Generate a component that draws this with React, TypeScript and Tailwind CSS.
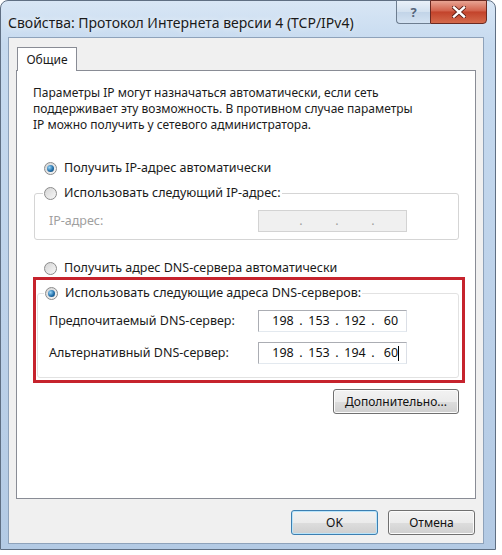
import React from 'react';

const Radio: React.FC<{ checked?: boolean; label: string }> = ({ checked, label }) => (
  <span className="flex items-center gap-[7px] h-4 whitespace-nowrap text-[12.5px]">
    <span className="w-[13px] h-[13px] shrink-0 rounded-full border border-[#8b8b8b] bg-[linear-gradient(135deg,#d4d4d4,#f8f8f8)] flex items-center justify-center">
      {checked && (
        <span className="w-[7px] h-[7px] rounded-full bg-[radial-gradient(circle_at_35%_35%,#9ad6f7,#2370ab_55%,#0c3b62)]" />
      )}
    </span>
    <span>{label}</span>
  </span>
);

const IpBox: React.FC<{ parts?: string[]; disabled?: boolean; caret?: boolean }> = ({
  parts = ['', '', '', ''],
  disabled,
  caret,
}) => (
  <div
    className={
      disabled
        ? 'w-[149px] h-[22px] border border-[#d3d3d3] bg-[#f0f0f0] flex items-center pl-[10px] text-[#a0a0a0]'
        : 'w-[149px] h-[22px] border border-[#abadb3] border-b-[#e3e9ef] border-r-[#dbdfe6] bg-white flex items-center pl-[10px] text-[#111] text-[12.5px]'
    }
  >
    {parts.map((p, i) => (
      <React.Fragment key={i}>
        <span className="w-[28px] text-center relative">
          {p}
          {caret && i === 3 && (
            <span className="absolute right-[6px] top-[1px] w-px h-[15px] bg-black" />
          )}
        </span>
        {i < 3 && <span className="w-[8px] text-center">.</span>}
      </React.Fragment>
    ))}
  </div>
);

const Btn: React.FC<{ label: string; primary?: boolean; w: string }> = ({ label, primary, w }) => (
  <button
    className={
      (primary
        ? 'border-[#3c7fb1] shadow-[inset_0_0_0_1px_#b9e4fa] '
        : 'border-[#707070] shadow-[inset_0_0_0_1px_#fbfbfb] ') +
      w +
      ' h-[25px] rounded-[3px] border bg-[linear-gradient(to_bottom,#f2f2f2_0%,#ebebeb_50%,#dddddd_51%,#cfcfcf_100%)] text-[#111] flex items-center justify-center'
    }
  >
    {label}
  </button>
);

export default function App() {
  return (
    <div className="w-[502px] h-[555px] bg-white font-['Noto_Sans',sans-serif] text-[12px] leading-4 text-[#1b1b1b]">
      <div className="w-[496px] h-[550px] rounded-t-[8px] border border-[#5f6f83] bg-[linear-gradient(to_bottom,#d8e6f5,#c6daef_8%,#bcd1e9_60%,#b3cae4)] flex flex-col">
        {/* title bar */}
        <div className="h-[36px] flex justify-between shrink-0">
          <div className="pl-[7px] pt-[12px] text-[14px] leading-5 text-[#1a1a1a] whitespace-nowrap [text-shadow:0_0_6px_#ffffff]">
            Свойства: Протокол Интернета версии 4 (TCP/IPv4)
          </div>
          <div className="flex mr-[8px] h-[24px] -mt-px">
            <div className="w-[34px] h-full rounded-bl-[4px] border border-[#6d7d90] border-r-0 bg-[linear-gradient(to_bottom,#e9f1f9,#d2e0ef_50%,#c2d4e8_51%,#d3e2f2)] flex items-center justify-center text-[#55647a] text-[13px] font-bold">
              ?
            </div>
            <div className="w-[57px] h-full rounded-br-[4px] border border-[#6a2a22] bg-[linear-gradient(to_bottom,#e8a493,#d2624c_45%,#c3432b_50%,#d46a4c)] flex items-center justify-center">
              <svg width="14" height="12" viewBox="0 0 14 12">
                <path d="M2 1.5 L12 10.5 M12 1.5 L2 10.5" stroke="#5a1d14" strokeWidth="4.2" strokeLinecap="square" />
                <path d="M2 1.5 L12 10.5 M12 1.5 L2 10.5" stroke="#ffffff" strokeWidth="2.4" strokeLinecap="square" />
              </svg>
            </div>
          </div>
        </div>

        {/* client */}
        <div className="ml-[7px] mr-[11px] h-[507px] border border-[#8ea2ba] bg-[#f0f0f0] pt-[9px] px-[7px] flex flex-col">
          <div className="flex pl-[1px]">
            <div className="relative z-10 -mb-px w-[60px] h-[24px] border border-[#898c95] border-b-0 bg-white flex items-center justify-center">
              Общие
            </div>
          </div>
          <div className="h-[429px] border border-[#898c95] bg-white pt-[14px] px-[16px] flex flex-col">
            <p className="whitespace-nowrap">
              Параметры IP могут назначаться автоматически, если сеть
              <br />
              поддерживает эту возможность. В противном случае параметры
              <br />
              IP можно получить у сетевого администратора.
            </p>

            <div className="mt-[27px] ml-[11px]">
              <Radio checked label="Получить IP-адрес автоматически" />
            </div>

            <fieldset className="mt-[9px] ml-[1px] border border-[#d5d5d5] rounded-[3px] pl-[8px] pr-[8px] pt-[9px] pb-[7px]">
              <legend className="px-[1px]">
                <Radio label="Использовать следующий IP-адрес:" />
              </legend>
              <div className="flex items-center ml-[6px] text-[12.5px]">
                <span className="w-[209px] text-[#a0a0a0]">IP-адрес:</span>
                <IpBox disabled />
              </div>
            </fieldset>

            <div className="mt-[20px] ml-[11px]">
              <Radio label="Получить адрес DNS-сервера автоматически" />
            </div>

            <div className="mt-px -mr-[6px] border-[3px] border-[#c6232d] pt-[5px] pb-[2px] pl-px pr-[3px]">
              <fieldset className="border border-[#e2e2e2] rounded-[3px] pl-[6px] pr-[8px] pt-[9px] pb-[13px]">
                <legend className="px-[1px]">
                  <Radio checked label="Использовать следующие адреса DNS-серверов:" />
                </legend>
                <div className="flex flex-col gap-[10px] ml-[5px] text-[12.5px]">
                  <div className="flex items-center">
                    <span className="w-[209px]">Предпочитаемый DNS-сервер:</span>
                    <IpBox parts={['198', '153', '192', '60']} />
                  </div>
                  <div className="flex items-center">
                    <span className="w-[209px]">Альтернативный DNS-сервер:</span>
                    <IpBox parts={['198', '153', '194', '60']} caret />
                  </div>
                </div>
              </fieldset>
            </div>

            <div className="mt-[6px] flex justify-end">
              <Btn label="Дополнительно..." w="w-[126px]" />
            </div>
          </div>

          <div className="mt-[11px] flex justify-end gap-[10px] pr-px">
            <Btn label="OK" primary w="w-[87px]" />
            <Btn label="Отмена" w="w-[87px]" />
          </div>
        </div>
      </div>
    </div>
  );
}
